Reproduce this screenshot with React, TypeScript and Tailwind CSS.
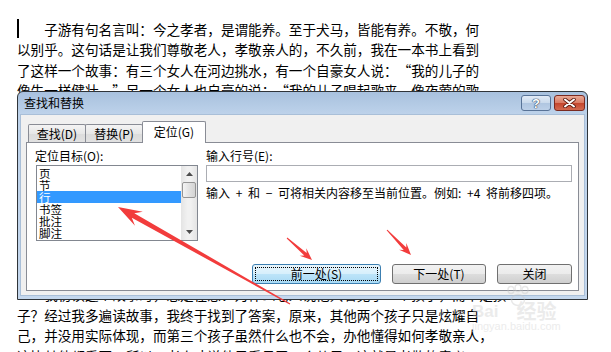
import React from "react";

const lines = [
  "　　子游有句名言叫：今之孝者，是谓能养。至于犬马，皆能有养。不敬，何",
  "以别乎。这句话是让我们尊敬老人，孝敬亲人的，不久前，我在一本书上看到",
  "了这样一个故事：有三个女人在河边挑水，有一个自豪女人说：“我的儿子的",
  "像牛一样健壮。”另一个女人也自豪的说：“我的儿子唱起歌来，像夜莺的歌",
  "声一样好听。”第三个女人却什么也没有说。这时，三个孩子向她们跑来了，",
  "一个孩子翻着跟头，一个孩子唱着歌，第三个孩子跑到母亲身边，接过母亲手",
  "中沉重的水桶，提着走了。三个女人问旁边的老人：“您看我们的儿子怎么样",
  "？”老人说：“儿子？我只看见了一个儿子。”这个故事给我留下了很深的印",
  "象，我反复地想着老人的话。三个孩子明明都在，为什么老人说只看见了一个",
  "儿子呢？是老人眼花了吗？还是老人故意这样说的呢？我一遍又一遍地读着这",
  "个故事，想从中找到答案。妈妈看我这么认真，就笑着说：“你再好好想想，",
  "答案就在故事里面。”我听了妈妈的话，又仔细地读了起来，边读边想，慢慢",
  "地，我好像明白了一点儿什么，可是又说不太清楚，于是我决定继续读下去。",
  "　　我初读这个故事时，总是在想：为什么老人说他只看见了一个孩子，而不是孩",
  "子？经过我多遍读故事，我终于找到了答案，原来，其他两个孩子只是炫耀自",
  "己，并没用实际体现，而第三个孩子虽然什么也不会，办他懂得如何孝敬亲人，",
  "这比其他都重要。所以，老人才说他只看见了一个儿子，这就是孝敬的意义。",
];

const items = ["页", "节", "行", "书签", "批注", "脚注"];

// curly quotes are drawn proportional by the font; keep them in a full-width cell
const renderLine = (l: string) =>
  l.split(/([“”])/).map((seg, i) =>
    seg === "“" ? (
      <span key={i} className="inline-block w-[1em] text-right">
        {seg}
      </span>
    ) : seg === "”" ? (
      <span key={i} className="inline-block w-[1em] text-left">
        {seg}
      </span>
    ) : (
      <span key={i}>{seg}</span>
    )
  );

function arrowPts(x1: number, y1: number, x2: number, y2: number, head: number, hw: number, w0: number, w1: number) {
  const dx = x2 - x1;
  const dy = y2 - y1;
  const len = Math.hypot(dx, dy);
  const ux = dx / len;
  const uy = dy / len;
  const nx = -uy;
  const ny = ux;
  const bx = x2 - ux * head;
  const by = y2 - uy * head;
  const mx = x2 - ux * head * 0.72;
  const my = y2 - uy * head * 0.72;
  const p = (x: number, y: number) => `${x.toFixed(1)},${y.toFixed(1)}`;
  return [
    p(x1 + nx * w1, y1 + ny * w1),
    p(mx + nx * w0, my + ny * w0),
    p(bx + nx * hw, by + ny * hw),
    p(x2, y2),
    p(bx - nx * hw, by - ny * hw),
    p(mx - nx * w0, my - ny * w0),
    p(x1 - nx * w1, y1 - ny * w1),
  ].join(" ");
}

const Arrows = () => (
  <svg className="absolute inset-0 pointer-events-none" width="611" height="352" viewBox="0 0 611 352">
    <polygon points={arrowPts(290, 304, 118, 207, 24, 8, 2.6, 0.6)} fill="#f23c3c" />
    <polygon points={arrowPts(287, 238, 312, 260, 12, 5, 1.8, 0.5)} fill="#f23c3c" />
    <polygon points={arrowPts(387, 230, 411, 255, 12, 5, 1.8, 0.5)} fill="#f23c3c" />
  </svg>
);

const Watermark = () => (
  <div className="absolute left-[470px] top-[284px] w-[108px] h-[50px] opacity-40 pointer-events-none">
    <svg className="absolute left-[35px] top-0" width="26" height="24" viewBox="0 0 26 24">
      <g fill="none" stroke="#c8c8c8" strokeWidth="1.5">
        <ellipse cx="6" cy="6" rx="3" ry="3.5" />
        <ellipse cx="13" cy="4" rx="3" ry="3.5" />
        <ellipse cx="20" cy="6" rx="3" ry="3.5" />
        <ellipse cx="13" cy="16" rx="6.5" ry="5.5" />
      </g>
    </svg>
    <div className="absolute left-[2px] top-[17px] flex items-end gap-[18px] font-['Liberation_Sans',sans-serif] font-bold text-[17px] leading-[18px] text-[#cfcfcf]">
      <span>Bai</span>
      <span className="font-['Noto_Sans_CJK_SC',sans-serif] text-[20px] leading-[20px]">经验</span>
    </div>
    <div className="absolute left-[2px] top-[36px] font-['Liberation_Sans',sans-serif] text-[11px] leading-[12px] text-[#cfcfcf]">
      jingyan.baidu.com
    </div>
  </div>
);

const Tab = ({ label, active, w }: { label: string; active?: boolean; w: string }) =>
  active ? (
    <div className={`${w} h-[22px] -ml-px relative z-10 bg-white border border-b-0 border-[#898c95] rounded-t-[2px] flex items-center justify-center pb-[1px]`}>
      {label}
    </div>
  ) : (
    <div className={`${w} h-[19px] -ml-px first:ml-0 bg-[linear-gradient(#f4f4f4,#e6e6e6_50%,#dcdcdc_50%,#e2e2e2)] border border-b-0 border-[#898c95] rounded-t-[2px] flex items-center justify-center`}>
      {label}
    </div>
  );

const Button = ({ label, w, primary }: { label: string; w: string; primary?: boolean }) =>
  primary ? (
    <div className={`${w} h-[20px] rounded-[3px] border border-[#3c7fb1] bg-[linear-gradient(#e8f5fc,#d6effc_50%,#bde4f9_50%,#a8d9f4)] outline-1 outline-dotted outline-black -outline-offset-4 flex items-center justify-center`}>
      {label}
    </div>
  ) : (
    <div className={`${w} h-[20px] rounded-[3px] border border-[#707070] bg-[linear-gradient(#f2f2f2,#ebebeb_50%,#dddddd_50%,#cfcfcf)] flex items-center justify-center`}>
      {label}
    </div>
  );

const Dialog = () => (
  <div className="absolute left-[17px] top-[91px] w-[571px] h-[209px] rounded-t-[6px] border border-[#2f3439] bg-[linear-gradient(#a8c1de,#bdd2ea_22px,#c4d7ed)] flex flex-col font-['Noto_Sans_CJK_SC',sans-serif] text-[12px] text-black">
    {/* title bar */}
    <div className="h-[22px] flex items-center pl-[6px] pr-[2px] gap-[3px]">
      <span className="flex-1 leading-[14px]">查找和替换</span>
      <div className="w-[30px] h-[16px] rounded-[3px] border border-[#587397] bg-[linear-gradient(#e2ebf6,#c9d9ec_50%,#afc5e0_50%,#bcd0e8)] flex items-center justify-center text-white font-bold text-[13px] leading-[13px] font-['Liberation_Sans',sans-serif] [text-shadow:0_0_1px_#2a3f5f,0_0_1px_#2a3f5f,0_0_1px_#2a3f5f]">
        ?
      </div>
      <div className="w-[31px] h-[16px] rounded-[3px] border border-[#7a2a20] bg-[linear-gradient(#eaa996,#d97a63_50%,#c4442c_50%,#d36a50)] flex items-center justify-center">
        <svg width="13" height="10" viewBox="0 0 13 10">
          <path d="M2 1.5 L11 8.5 M11 1.5 L2 8.5" stroke="#5b1a10" strokeWidth="3.6" strokeLinecap="round" />
          <path d="M2 1.5 L11 8.5 M11 1.5 L2 8.5" stroke="#ffffff" strokeWidth="2" strokeLinecap="round" />
        </svg>
      </div>
    </div>

    {/* client area */}
    <div className="flex-1 mx-[2px] mb-[3px] bg-[#f0f0f0] border border-[#a9bfd8] flex flex-col pt-[6px] px-[5px] pb-[4px]">
      <div className="flex items-end pl-[2px] leading-[14px]">
        <Tab label="查找(D)" w="w-[58px]" />
        <Tab label="替换(P)" w="w-[58px]" />
        <Tab label="定位(G)" w="w-[64px]" active />
      </div>
      <div className="flex-1 -mt-px bg-white border border-[#898c95] flex flex-col pt-[5px] pl-[8px] pr-[6px] pb-[6px]">
        <div className="flex gap-[8px]">
          {/* left column */}
          <div className="w-[163px] flex flex-col">
            <div className="leading-[16px]">定位目标(O):</div>
            <div className="ml-px mt-px h-[76px] border border-[#828790] flex">
              <div className="flex-1 pt-[1px] text-[11.5px]">
                {items.map((it) => (
                  <div
                    key={it}
                    className={
                      it === "行"
                        ? "h-[12px] leading-[12px] pl-[2px] bg-[#3399ff] text-white"
                        : "h-[12px] leading-[12px] pl-[2px]"
                    }
                  >
                    {it}
                  </div>
                ))}
              </div>
              <div className="w-[16px] bg-[linear-gradient(90deg,#e4e4e4,#f1f1f1_40%,#f1f1f1_60%,#e4e4e4)] flex flex-col">
                <div className="h-[16px] flex items-center justify-center">
                  <svg width="7" height="4" viewBox="0 0 7 4">
                    <path d="M3.5 0 L7 4 L0 4 Z" fill="#4d4d4d" />
                  </svg>
                </div>
                <div className="h-[16px] mx-[1px] rounded-[2px] border border-[#959595] bg-[linear-gradient(90deg,#f4f4f4,#e2e2e2_50%,#d4d4d4)]" />
                <div className="flex-1" />
                <div className="h-[16px] flex items-center justify-center">
                  <svg width="7" height="4" viewBox="0 0 7 4">
                    <path d="M0 0 L7 0 L3.5 4 Z" fill="#4d4d4d" />
                  </svg>
                </div>
              </div>
            </div>
          </div>
          {/* right column */}
          <div className="flex-1 flex flex-col">
            <div className="leading-[16px]">输入行号(E):</div>
            <div className="mt-px h-[17px] border border-[#abadb3] bg-white" />
            <div className="mt-[4px] leading-[13px] whitespace-nowrap [word-spacing:3px]">
              输入 + 和 − 可将相关内容移至当前位置。例如: +4 将前移四项。
            </div>
          </div>
        </div>
        <div className="mt-auto flex justify-end gap-[11px] leading-[14px]">
          <Button label="前一处(S)" w="w-[129px]" primary />
          <Button label="下一处(T)" w="w-[94px]" />
          <Button label="关闭" w="w-[75px]" />
        </div>
      </div>
    </div>
  </div>
);

export default function App() {
  return (
    <div className="relative w-[611px] h-[352px] overflow-hidden bg-white">
      <div className="pt-[19px] pl-[17px] font-['Noto_Sans_CJK_SC',sans-serif] text-[13.6px] leading-[20.4px] text-black">
        {lines.map((l, i) => (
          <div key={i} className="whitespace-nowrap">
            {i === 0 && <span className="inline-block align-top w-[2px] h-[19px] -mr-[2px] bg-black" />}
            {renderLine(l)}
          </div>
        ))}
      </div>
      <Dialog />
      <Watermark />
      <Arrows />
    </div>
  );
}
